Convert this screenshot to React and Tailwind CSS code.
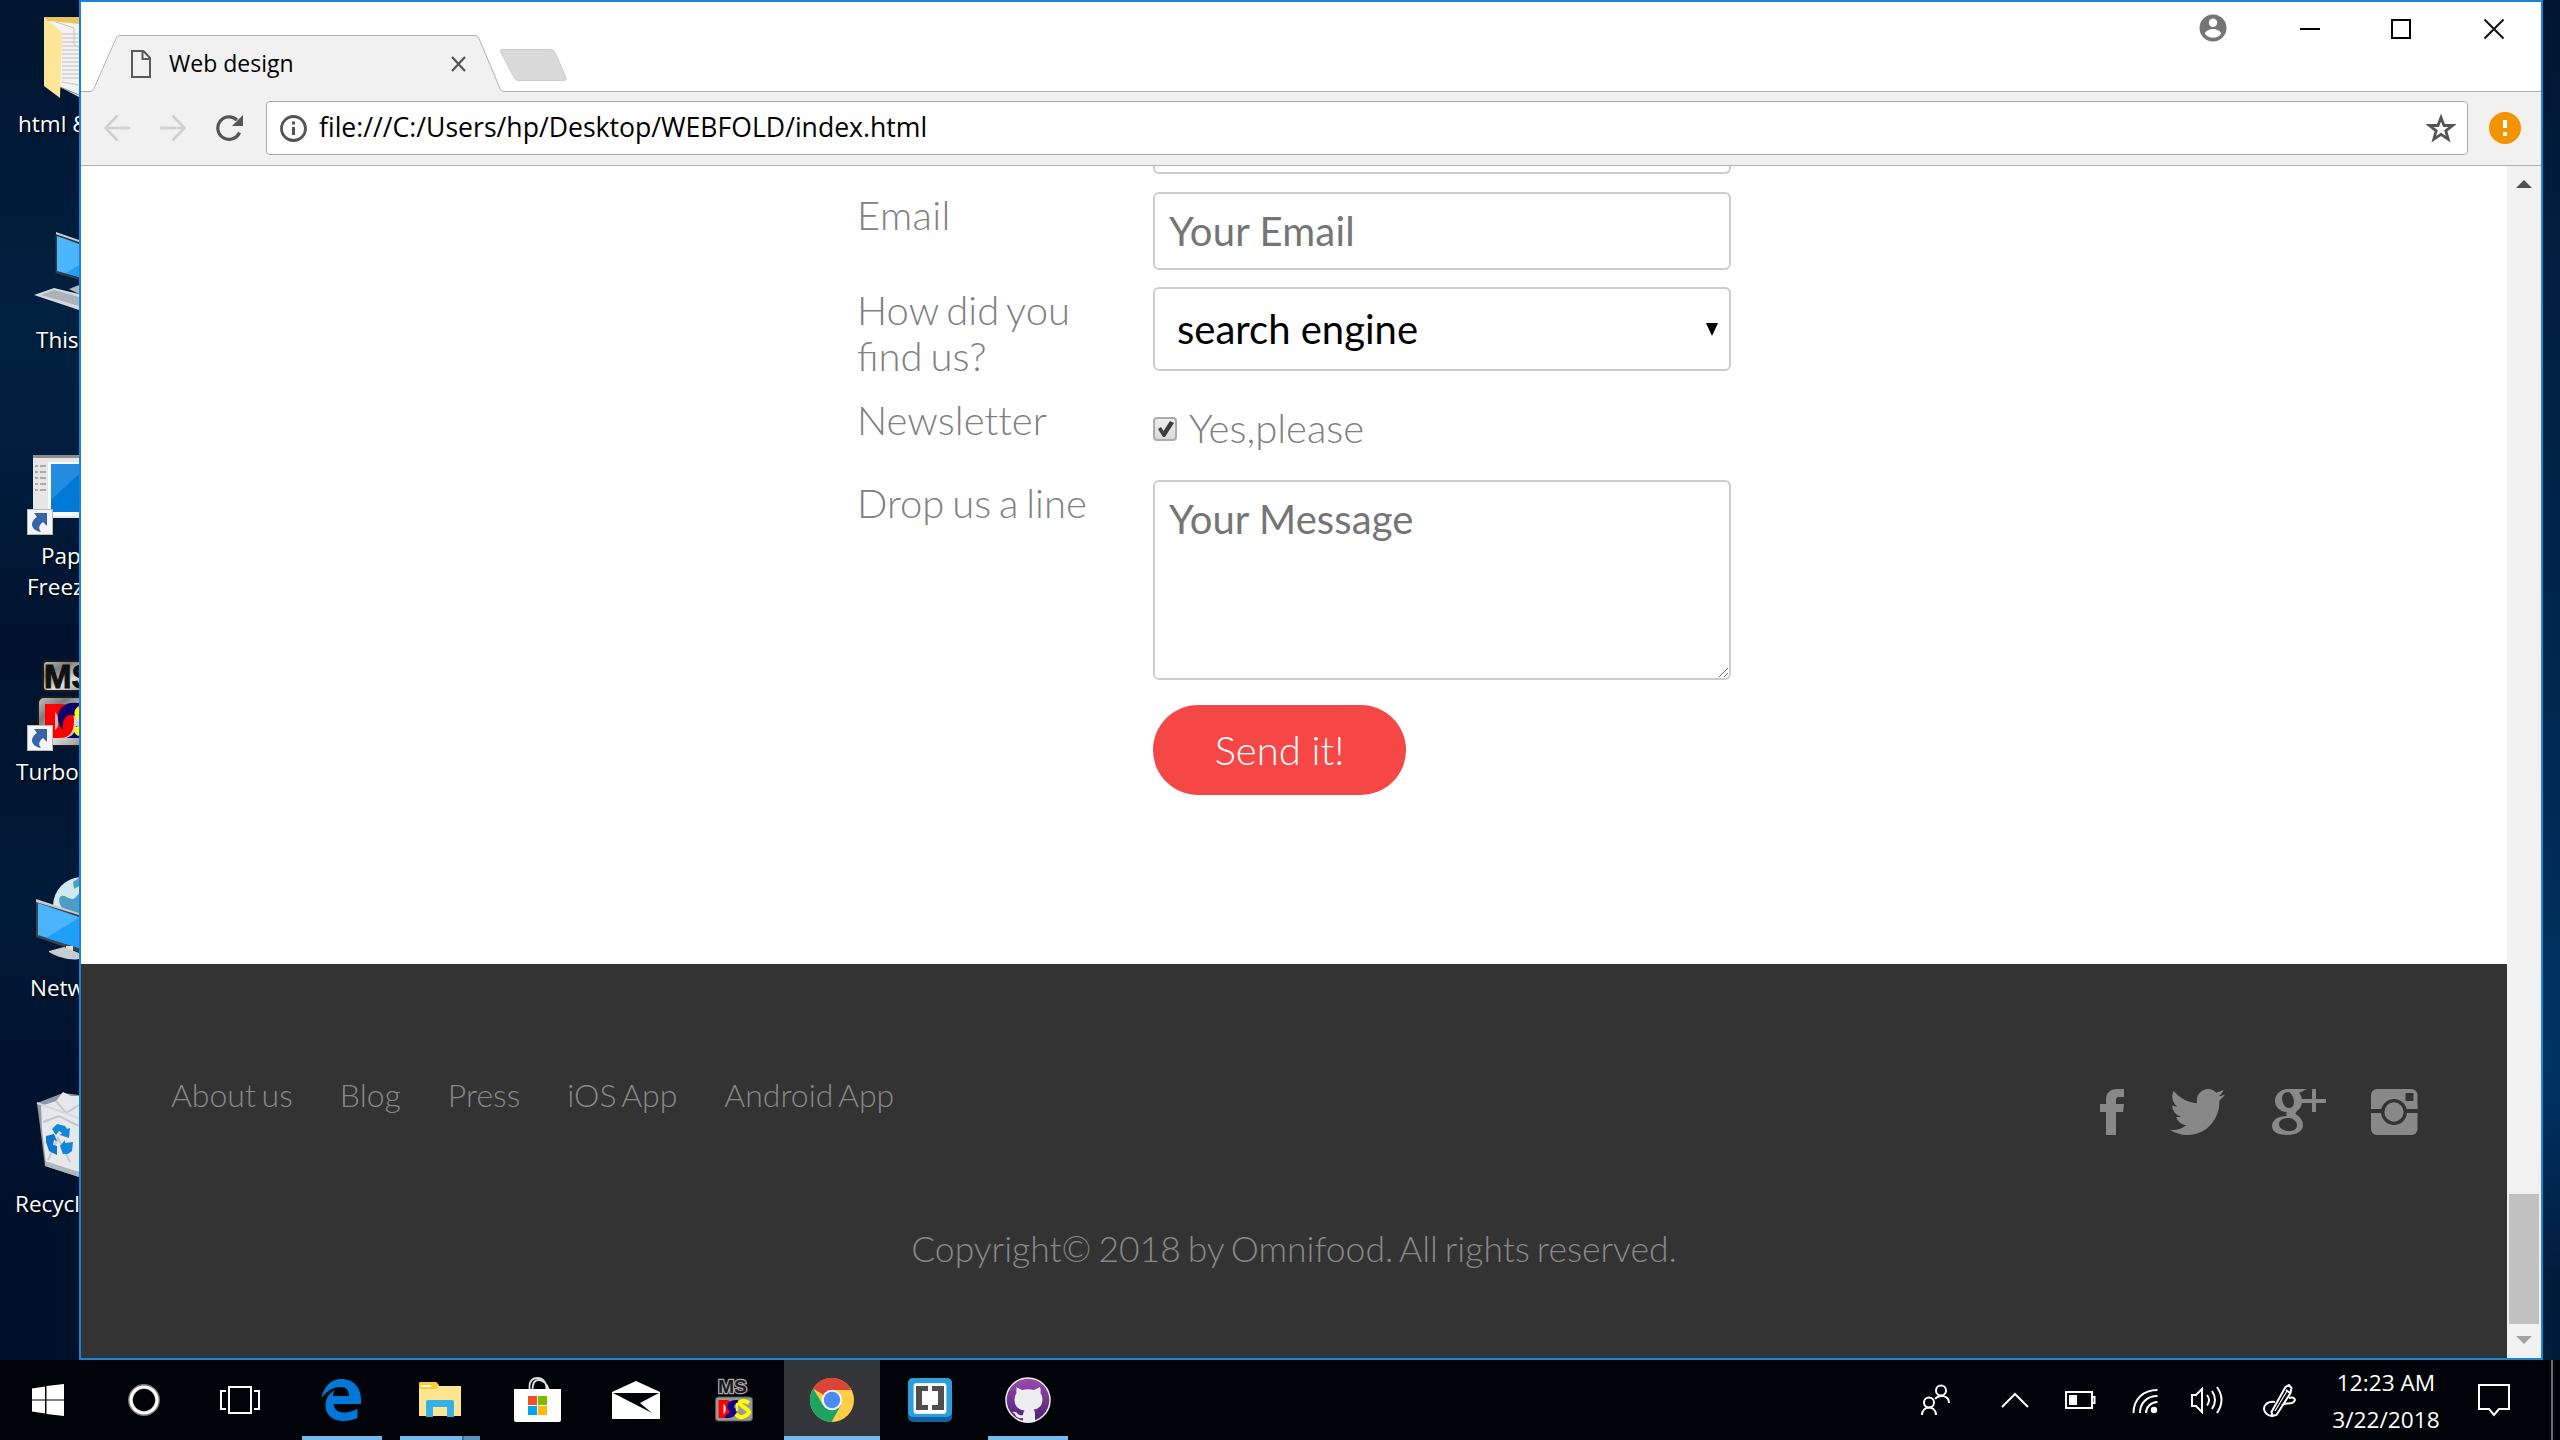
import React from "react";

function Art({ box, className = "", children, stretch }) {
  const [, , w, h] = box;
  return (
    <svg
      width={w}
      height={h}
      viewBox={box.join(" ")}
      preserveAspectRatio={stretch ? "none" : "xMidYMid meet"}
      className={"block shrink-0 " + className}
    >
      {children}
    </svg>
  );
}

/* ---------- Desktop icons ---------- */

function Shortcut({ y }) {
  return (
    <g transform={`translate(27 ${y})`}>
      <rect x="0.5" y="0.5" width="25" height="25" fill="#f6f6f6" stroke="#b9b9b9" />
      <path d="M7 4h13v13l-4-4c-4 3-5 6-2 10C7 22 3 17 6 12c1-2 2-3 4-4z" fill="#3565a8" />
    </g>
  );
}

function FolderArt() {
  return (
    <Art box={[0, 0, 79, 108]}>
      <path d="M44 17h35v70L44 80z" fill="#e9c562" />
      <path d="M49 21l30 3v73L60 87z" fill="#f3f3f3" />
      <path d="M62 34h17M62 38h17M62 42h17M62 46h17M62 50h17M62 54h17M62 58h17M62 62h17M62 66h17M62 70h17M62 74h17M62 78h17M62 82l17 3" stroke="#d0d0d0" strokeWidth="1.500" />
      <path d="M56 22l18 6v16l5 4" stroke="#d8c79a" fill="none" />
      <path d="M60 87l19 8" stroke="#777" />
      <path d="M44 18l18 14-2 66-16-12z" fill="#ffe598" />
    </Art>
  );
}

function ThisPcArt() {
  return (
    <Art box={[0, 216, 79, 108]}>
      <path d="M56 232l23 8v4l-23-9z" fill="#c6cbd0" />
      <path d="M55.500 234l23.500 8v38l-23.500-7z" fill="#303a42" />
      <path d="M57 236l22 8v33l-22-6z" fill="#4bb5fd" />
      <path d="M66 273l13-8v12z" fill="#1ea0f3" />
      <path d="M69 289l10-4v9z" fill="#aeb6bd" />
      <path d="M34 295l20-7 25 6v16z" fill="#d5d9dd" />
      <path d="M41 295l13-5 25 7v9z" fill="#8b9298" opacity=".55" />
    </Art>
  );
}

function FreezerArt() {
  return (
    <Art box={[0, 432, 79, 108]}>
      <rect x="33" y="455" width="50" height="63" fill="#e6e6e6" />
      <rect x="33" y="455" width="50" height="3" fill="#8c8c92" />
      <rect x="48" y="462" width="40" height="54" fill="#fafafa" />
      <rect x="51" y="464" width="34" height="48" fill="#0078d7" />
      <path d="M51 464h28v10L51 500z" fill="#3b9ae6" opacity=".6" />
      {[466, 472, 478, 484, 490].map((y) => (
        <path key={y} d={`M35 ${y}h3M40 ${y}h6`} stroke="#aaa" strokeWidth="2" />
      ))}
      <Shortcut y={509} />
    </Art>
  );
}

function TurboArt() {
  return (
    <Art box={[0, 648, 79, 108]}>
      <defs>
        <linearGradient id="metal" x1="0" y1="0" x2="1" y2="1">
          <stop offset="0" stopColor="#c5c5c5" />
          <stop offset=".25" stopColor="#7c7c7c" />
          <stop offset=".55" stopColor="#dedede" />
          <stop offset="1" stopColor="#777" />
        </linearGradient>
      </defs>
      <rect x="43" y="661" width="60" height="30" rx="4" fill="url(#metal)" stroke="#1b1b1b" strokeWidth="2" />
      <text x="44" y="688" fontFamily="Liberation Sans" fontWeight="700" fontSize="33" stroke="#111" strokeWidth="1" fill="#111">MS</text>
      <rect x="38" y="697" width="60" height="49" rx="6" fill="url(#metal)" stroke="#1b1b1b" strokeWidth="2" />
      <path d="M45 704h16c9 0 13 7 13 17s-4 17-14 17H45z" fill="#f00" />
      <path d="M55 712v18c5-2 4-15 0-18z" fill="#bbb" />
      <path d="M79 703c-14-2-21 5-21 14 0 6 2 10 5 13-1-9 2-15 8-15 3 0 5 1 8 3z" fill="#10006e" />
      <path d="M66 738c8-2 9-7 10-12l3 2v10z" fill="#10006e" />
      <path d="M79 706c-7 4-5 12 0 14v16c-4-1-6-5-5-9h5" fill="#ff0" />
      <Shortcut y={725} />
    </Art>
  );
}

function NetworkArt() {
  return (
    <Art box={[0, 864, 79, 108]}>
      <circle cx="82" cy="906" r="29" fill="#cfe9ef" />
      <path d="M60 897c4-4 8 2 12 2s5-5 9-7v26l-18-5c0-6-6-10-3-16zM73 882l6-4v8l-5 3z" fill="#4e9dc5" />
      <path d="M36 900l43 14v38l-43-15z" fill="#39434c" />
      <path d="M36 899l43 14v2l-43-13z" fill="#c6cbd0" />
      <path d="M38 903l41 14v31l-41-13z" fill="#4ab4ff" />
      <path d="M46 938l33-20v30z" fill="#1f9ff5" />
      <path d="M66 946h7v7h-7z" fill="#dfe3e6" />
      <path d="M49 951l15-4 15 6v6c-8 2-22-2-30-7z" fill="#c6ccd1" />
    </Art>
  );
}

function BinArt() {
  return (
    <Art box={[0, 1080, 79, 108]}>
      <path d="M37 1103l26-10 16 2v82l-34-11z" fill="#8e98a4" />
      <path d="M41 1106l15-5 7-9 8 4 8 0v76l-33-8-4-34z" fill="#e6e8ea" />
      <path d="M56 1101l10 12 13-8M43 1122l16-6 20 10M48 1160l10-22 12 24" stroke="#c3c7cb" strokeWidth="2" fill="none" />
      <path d="M37 1103l42 15" stroke="#d4d9de" strokeWidth="2" />
      <path d="M45 1161l34 11v5l-34-11z" fill="#b1b6bb" />
      <path d="M52 1129l5-5 8 2 2 3 3-1-1 10-9-3 2-2-3-2-3 4z" fill="#0f86dc" />
      <path d="M46 1136l8-2 3 7-3-1-1 5 4 1v9l-8-4-3-9z" fill="#0b78d0" />
      <path d="M60 1146l5-6 0 3 8-1-1 9-4 3-5 0z" fill="#0f86dc" />
    </Art>
  );
}

function DeskCell({ art, indent, children }) {
  return (
    <div className="flex h-[216px] flex-col">
      {art}
      <div
        className={
          "whitespace-nowrap font-['Open_Sans','Noto_Sans',sans-serif] text-[22.5px] leading-[31px] text-white [text-shadow:1px_2px_3px_#000] " +
          indent
        }
      >
        {children}
      </div>
    </div>
  );
}

/* ---------- Browser chrome ---------- */

function TabStrip() {
  return (
    <div className="flex h-[90px] shrink-0 bg-white">
      <div className="relative h-[90px] w-[500px]">
        <Art box={[81, 2, 500, 90]}>
          <path d="M81 91.5h9q4 0 5-3l21-49q2-4 5-4h354q3 0 4 3l21 50q1 3 5 3h80v2H81z" fill="#f1f1f1" />
          <path d="M81 91.5h9q3 0 4-3l22-50q1-3 4-3h355q3 0 4 3l21 50q1 3 4 3h80" fill="none" stroke="#b0b0b0" />
          <path d="M503 49.500h47q4 0 5 3l11 25q1 3-3 3h-44q-4 0-5-3l-13-25q-2-3 2-3z" fill="#d9d9d9" stroke="#cbcbcb" />
        </Art>
        <div className="absolute inset-0 flex items-center pl-[50px] pt-[34px]">
          <Art box={[131, 50, 20, 28]}>
            <path d="M132 51h11.500l6.500 7v19h-18zM142.500 51v8h7.500" fill="none" stroke="#5a5a5a" strokeWidth="2" />
          </Art>
          <span className="ml-[18px] w-[282px] whitespace-nowrap pb-[2px] font-['Open_Sans','Noto_Sans',sans-serif] text-[23px] leading-[30px] text-black">Web design</span>
          <Art box={[451, 56, 15, 16]}>
            <path d="M452 57l13 14M465 57l-13 14" stroke="#555" strokeWidth="2.2" />
          </Art>
        </div>
      </div>
      <div className="flex h-[90px] flex-1 justify-end border-b border-[#b0b0b0] pt-[12px]">
        <Art box={[2199, 14, 28, 28]}>
          <circle cx="2213" cy="28" r="13.500" fill="#757575" />
          <circle cx="2213" cy="22.800" r="4.200" fill="#fff" />
          <path d="M2204.800 33.500c1-3 5-4.500 8.200-4.500s7.200 1.500 8.200 4.500c-2 3-5 4.300-8.200 4.300s-6.200-1.300-8.200-4.300z" fill="#fff" />
        </Art>
        <Art box={[2300, 14, 20, 28]} className="ml-[73px]">
          <path d="M2300 29h20" stroke="#000" strokeWidth="2" />
        </Art>
        <Art box={[2391, 14, 20, 28]} className="ml-[71px]">
          <rect x="2392" y="20" width="18" height="18" fill="none" stroke="#000" strokeWidth="2" />
        </Art>
        <Art box={[2484, 14, 20, 28]} className="ml-[73px] mr-[37px]">
          <path d="M2484.500 19.500l19 19M2503.500 19.500l-19 19" stroke="#111" strokeWidth="2" />
        </Art>
      </div>
    </div>
  );
}

function Toolbar() {
  return (
    <div className="flex h-[74px] shrink-0 items-center border-b border-[#b0b0b0] bg-[#f1f1f1] pb-[1px] pl-[23px] pr-[20px]">
      <Art box={[104, 114, 26, 28]}>
        <path d="M130 128h-24M117.500 115.500L105.500 128l12 12.500" fill="none" stroke="#d0d0d0" strokeWidth="2.600" />
      </Art>
      <Art box={[160, 114, 26, 28]} className="ml-[30px]">
        <path d="M160 128h24M172.500 115.500L184.500 128l-12 12.500" fill="none" stroke="#d0d0d0" strokeWidth="2.600" />
      </Art>
      <Art box={[215, 114, 28, 28]} className="ml-[29px]">
        <path d="M239.500 132.500a11.300 11.300 0 1 1-2.500-12.500" fill="none" stroke="#555" strokeWidth="3.200" />
        <path d="M243 115v11h-11z" fill="#555" />
      </Art>
      <div className="ml-[23px] flex h-[54px] flex-1 items-center rounded-[4px] border border-[#a9a9a9] bg-white">
        <Art box={[280, 114, 28, 28]} className="ml-[13px]">
          <circle cx="293.500" cy="128.500" r="12" fill="none" stroke="#555" strokeWidth="2.800" />
          <path d="M293.500 121.500v3M293.500 127v8" stroke="#555" strokeWidth="3" />
        </Art>
        <span className="ml-[11px] flex-1 whitespace-nowrap pb-[2px] font-['Open_Sans','Noto_Sans',sans-serif] text-[26.600px] leading-[36px] text-black">
          file:///C:/Users/hp/Desktop/WEBFOLD/index.html
        </span>
        <Art box={[2426, 113, 30, 30]} className="mr-[11px]">
          <path d="M2441 117.500l3 8h8.500l-6.700 5.300 2.400 8.400-7.200-4.800-7.200 4.800 2.400-8.400-6.700-5.300h8.500z" fill="none" stroke="#555" strokeWidth="2.800" />
        </Art>
      </div>
      <Art box={[2489, 112, 32, 32]} className="ml-[21px]">
        <circle cx="2505" cy="128" r="16" fill="#f29400" />
        <path d="M2505 120v8M2505 132v4" stroke="#fff" strokeWidth="4" />
      </Art>
    </div>
  );
}

/* ---------- Page ---------- */

const label = "text-[40px] leading-[46px] font-light text-[#808080] whitespace-nowrap [word-spacing:-3px]";
const field =
  "box-border w-[578px] rounded-[6px] border-2 border-[#ccc] bg-white text-[40px] font-normal";

function ContactForm() {
  return (
    <div className="h-[798px] bg-white pl-[776px]">
      <div className="ml-[296px] h-[8px] w-[578px] rounded-b-[6px] border-2 border-t-0 border-[#ccc]" />
      <div className="grid grid-cols-[296px_578px] grid-rows-[95px_109px_84px_225px_90px] pt-[18px]">
        <div className={label + " tracking-[0.4px]"}>Email</div>
        <input placeholder="Your Email" className={field + " h-[78px] px-[14px] tracking-[0.2px] placeholder:text-[#757575] placeholder:opacity-100"} />
        <div className={label}>
          How did you
          <br />
          find us?
        </div>
        <div className={field + " flex h-[84px] items-center justify-between pl-[22px] pr-[11px] leading-[48px] text-black"}>
          <span>search engine</span>
          <Art box={[1706, 322, 12, 13]}>
            <path d="M1706 322h12l-6 13z" fill="#000" />
          </Art>
        </div>
        <div className={label + " pt-[1px] [font-variant-ligatures:none]"}>Newsletter</div>
        <div className="flex pt-[8px]">
          <Art box={[1153, 404, 24, 46]}>
            <defs>
              <linearGradient id="chk" x1="0" y1="0" x2="0" y2="1">
                <stop offset="0" stopColor="#efefef" />
                <stop offset="1" stopColor="#dadada" />
              </linearGradient>
            </defs>
            <rect x="1154" y="418" width="22" height="22" rx="3" fill="url(#chk)" stroke="#acacac" strokeWidth="2" />
            <path d="M1158 429l3-2 2.500 4 6.500-10 4 2-9 14h-2z" fill="#3d3d3d" />
          </Art>
          <span className={label + " ml-[12px] pt-[1px]"}>Yes,please</span>
        </div>
        <div className={label}>Drop us a line</div>
        <div className="relative h-[200px] w-[578px]">
          <textarea
            placeholder="Your Message"
            className={field + " block h-[200px] resize-none px-[14px] py-[13px] leading-[48px] tracking-[0.1px] placeholder:text-[#757575] placeholder:opacity-100"}
          />
          <div className="absolute bottom-[3px] right-[3px]">
            <Art box={[0, 0, 9, 9]}>
              <path d="M0 9l9-9M5 9l4-4" stroke="#666" />
            </Art>
          </div>
        </div>
        <div />
        <button className="h-[90px] w-[253px] rounded-full bg-[#f64747] pb-[1px] text-[40px] font-light text-white">Send it!</button>
      </div>
    </div>
  );
}

function Footer() {
  const link = "whitespace-nowrap";
  return (
    <div className="flex-1 bg-[#333] font-light text-[#888]">
      <div className="flex h-[260px] justify-between pl-[90px] pr-[89px] pt-[112px]">
        <div className="flex gap-[47px] text-[32px] leading-[38px] [word-spacing:-3px]">
          <span className={link}>About us</span>
          <span className={link}>Blog</span>
          <span className={link}>Press</span>
          <span className={link}>iOS App</span>
          <span className={link}>Android App</span>
        </div>
        <div className="flex pt-[13px]">
          <Art box={[2100, 1089, 24, 46]}>
            <path d="M2100 1104h6v-4c0-7 4-11 11-11h7v8h-5c-2 0-3 1-3 3v4h8l-1 8h-7v23h-10v-23h-6z" fill="#888" />
          </Art>
          <svg width="55" height="46" viewBox="20 64 472 384" preserveAspectRatio="none" className="ml-[46px] block">
            <path
              fill="#888"
              d="M492 109.5c-17.4 7.7-36 12.9-55.6 15.3 20-12 35.4-31 42.6-53.6-18.7 11.1-39.4 19.2-61.5 23.5C399.8 75.8 374.6 64 346.8 64c-53.5 0-96.8 43.4-96.8 96.9 0 7.600.8 15 2.500 22.100-80.500-4-151.900-42.600-199.600-101.300-8.300 14.300-13.100 31-13.100 48.700 0 33.600 17.200 63.300 43.200 80.700-16-.4-31-4.800-44-12.100v1.200c0 47 33.400 86.100 77.700 95-8.100 2.200-16.700 3.400-25.500 3.400-6.200 0-12.300-.6-18.200-1.800 12.300 38.500 48.100 66.500 90.500 67.300-33.100 26-74.900 41.500-120.300 41.500-7.800 0-15.500-.5-23.100-1.400C62.800 432 113.700 448 168.300 448 346.600 448 444 300.300 444 172.200c0-4.200-.1-8.400-.3-12.500C462.600 146 479 129 492 109.500z"
            />
          </svg>
          <Art box={[2272, 1089, 54, 46]} className="ml-[47px]">
            <path
              fill="#888"
              fillRule="evenodd"
              d="M2307 1089l-8 4c2 2 3 4 3 8 0 5-2 8-5 10-2 2-2 3 0 4 4 3 6 6 6 10 0 6-6 10-16 10-9 0-15-3-15-9s6-10 15-10c-1-1-1-3 0-4-7 0-12-5-12-11 0-7 6-12 14-12zM2288 1092c-4 0-6 3-6 7 1 5 3 9 7 9s5-3 5-7c-1-5-3-9-6-9zM2288 1118c-6 0-9 3-9 6 0 4 4 7 10 7 5 0 8-2 8-6 0-3-2-4-4-6-1-1-3-1-5-1z"
            />
            <path d="M2302 1101h24M2314 1089v23" stroke="#888" strokeWidth="4" />
          </Art>
          <Art box={[2371, 1089, 47, 46]} className="ml-[45px]">
            <rect x="2371" y="1089" width="46.500" height="46" rx="6" fill="#888" />
            <path d="M2371 1111h47" stroke="#333" strokeWidth="4" />
            <circle cx="2394" cy="1112" r="11.300" fill="#888" stroke="#333" strokeWidth="3.300" />
            <rect x="2405.500" y="1093" width="8" height="8" rx="1" fill="#333" />
          </Art>
        </div>
      </div>
      <div className="pt-[3px] text-center text-[35.500px] leading-[43px] [word-spacing:-2.700px]">Copyright© 2018 by Omnifood. All rights reserved.</div>
    </div>
  );
}

function Scrollbar() {
  return (
    <div className="flex w-[34px] shrink-0 flex-col items-center bg-[#f1f1f1] pt-[14px]">
      <Art box={[0, 0, 16, 8]}>
        <path d="M0 8l8-8 8 8z" fill="#505050" />
      </Art>
      <div className="mt-[1006px] h-[130px] w-[30px] bg-[#c1c1c1]" />
      <Art box={[0, 0, 16, 8]} className="mt-[12px]">
        <path d="M0 0h16l-8 8z" fill="#a3a3a3" />
      </Art>
    </div>
  );
}

/* ---------- Taskbar ---------- */

function Slot({ active, underline, children }) {
  return (
    <div className={"flex h-[80px] w-[96px] shrink-0 flex-col items-center " + (active ? "bg-[#343639]" : "")}>
      <div className="flex h-[76px] items-center pt-[4px]">{children}</div>
      {underline}
    </div>
  );
}

function Taskbar() {
  const bar = <div className="h-[4px] w-[80px] bg-[#76b9ed]" />;
  return (
    <div className="flex h-[80px] w-full bg-[#000307]">
      <Slot>
        <Art box={[32, 1384, 32, 32]}>
          <path d="M32 1388.500l13-2v13H32zM46.500 1386l17.500-2v15.500H46.500zM32 1400.500h13v13l-13-2zM46.500 1400.500H64v15.500l-17.500-2z" fill="#fff" />
        </Art>
      </Slot>
      <Slot>
        <Art box={[128, 1384, 32, 32]}>
          <circle cx="144" cy="1400" r="13.500" fill="none" stroke="#777" strokeWidth="5" />
          <circle cx="144" cy="1400" r="13" fill="none" stroke="#fff" strokeWidth="3.200" />
        </Art>
      </Slot>
      <Slot>
        <Art box={[220, 1386, 40, 28]}>
          <path d="M229 1387h22v26h-22zM226 1391h-5v18h5M254 1391h5v18h-5" fill="none" stroke="#fff" strokeWidth="2" />
        </Art>
      </Slot>
      <div className="ml-[6px] flex gap-[2px]">
        <Slot underline={bar}>
          <Art box={[321, 1379, 40, 42]} className="mr-[2px]">
            <path
              fill="#0078d7"
              d="M321.500 1398c2-11 9-19 20-19 12 0 19.500 9 19.500 20v5h-27.500c.5 6 5 8.500 11 8.500 4.500 0 8.500-1.300 13-3.700v9.200c-4 2-9 3-14 3-11 0-18-6-18-15.500 0-7 3.500-12.500 9.500-15.500-1.500 2-2 4-2 6h16c0-6-3-9-8.500-9-8 0-14 4.500-19 11z"
            />
          </Art>
        </Slot>
        <Slot
          underline={
            <div className="flex h-[4px] w-[80px]">
              <div className="w-[62px] bg-[#76b9ed]" />
              <div className="w-[18px] border-l-2 border-[#446d8f] bg-[#5d92bf]" />
            </div>
          }
        >
          <Art box={[419, 1382, 42, 36]}>
            <path d="M421 1382h15l3 4h22v30h-42v-32q0-2 2-2z" fill="#ffe592" />
            <path d="M421 1382h15l3 3-3 4h-17v-5q0-2 2-2z" fill="#fccc35" />
            <path d="M421 1386h10" stroke="#fff" strokeWidth="2" />
            <path d="M426 1417v-15q0-2 2-2h24q2 0 2 2v15h-7v-10h-14v10z" fill="#36b1e8" />
          </Art>
        </Slot>
        <Slot>
          <Art box={[514, 1376, 47, 45]} className="mr-[2px] mb-[2px]">
            <path d="M529.500 1389v-3c0-6 3-9 8-9s9 4 9 11M532.500 1389c0-6 2-10 6-10s9 4 10 9" fill="none" stroke="#ddd" strokeWidth="1.800" />
            <path d="M514 1388h47v31q0 2-2 2h-43q-2 0-2-2z" fill="#fff" />
            <path d="M528 1395h9v9h-9z" fill="#f25022" />
            <path d="M538 1395h9v9h-9z" fill="#7fba00" />
            <path d="M528 1405h9v9h-9z" fill="#00a4ef" />
            <path d="M538 1405h9v9h-9z" fill="#ffb900" />
          </Art>
        </Slot>
        <Slot>
          <Art box={[612, 1381, 48, 38]}>
            <path d="M612 1392l24-11 24 11v27h-48z" fill="#fff" />
            <path d="M613 1393h46l-19 10 12 10z" fill="#000307" />
          </Art>
        </Slot>
        <Slot>
          <Art box={[715, 1378, 38, 44]}>
            <text x="718" y="1393" fontFamily="Liberation Sans" fontWeight="700" fontSize="19" textLength="29" lengthAdjust="spacingAndGlyphs" fill="#1a1a1a" stroke="#aaa" strokeWidth="2.400" paintOrder="stroke">MS</text>
            <rect x="715.500" y="1397" width="37" height="24" rx="3" fill="#999" stroke="#555" />
            <path d="M718.500 1400h8c9 0 9 18 0 18h-8z" fill="#f00" />
            <path d="M723.500 1404v10c3-1 3-9 0-10z" fill="#ddd" />
            <path d="M738 1400c-11-1-14 8-8 11-1 4-5 2-5 7 10 1 15-6 9-11 0-3 4-2 4-7z" fill="#10008a" />
            <path d="M749 1403q-5-3-8-1.500t2 5 6 5-4 4.500-9-2" fill="none" stroke="#ff0" strokeWidth="4" />
            <path d="M737 1403v8" stroke="#ff0" strokeWidth="2.500" />
          </Art>
        </Slot>
        <Slot active underline={<div className="h-[4px] w-full bg-[#76b9ed]" />}>
          <Art box={[809, 1377, 46, 46]}>
            <circle cx="832" cy="1400" r="22" fill="#ffce44" />
            <path d="M832 1400l-19-11.500A22 22 0 0 1 851.500 1390H832z" fill="#db4437" />
            <path d="M813.200 1388.500A22 22 0 0 0 831.500 1422l9.500-17-9-5-9 5z" fill="#1da462" />
            <circle cx="832" cy="1400" r="10.300" fill="#f1f1f1" />
            <circle cx="832" cy="1400" r="8.200" fill="#4c8bf5" />
          </Art>
        </Slot>
        <Slot>
          <Art box={[908, 1378, 44, 44]}>
            <rect x="908" y="1378" width="44" height="44" rx="5" fill="#14619f" />
            <rect x="908" y="1378" width="44" height="39" rx="5" fill="#2a9fdb" />
            <rect x="914" y="1383.500" width="32" height="30" rx="2" fill="#fff" stroke="#dff0fa" />
            <path d="M916 1386h12v5h-6v14h6v5h-12zM944 1386h-12v5h6v14h-6v5h12z" fill="#4f4f4f" />
          </Art>
        </Slot>
        <Slot underline={bar}>
          <Art box={[1005, 1377, 46, 46]}>
            <defs>
              <linearGradient id="gh" x1="0" y1="0" x2="0" y2="1">
                <stop offset="0" stopColor="#9a4cad" />
                <stop offset="1" stopColor="#4a1f72" />
              </linearGradient>
            </defs>
            <circle cx="1028" cy="1400" r="22" fill="url(#gh)" stroke="#eee" strokeWidth="1.500" />
            <path
              d="M1016 1387l6 3q6-1.500 12 0l6-3q1 3 .5 6 2 3 2 6c0 7-4 10-9 10.500q1.500 1.500 1.500 4v8.500q-6 1.500-12 0v-4q-5 1-7-2-1-3-4-4 4-1 6 2 2 2 5 1 0-3 1.500-4.500c-6-1-10-4-10-11q0-3.500 2-6.500-.5-3 .5-6z"
              fill="#ededf0"
            />
          </Art>
        </Slot>
      </div>

      <div className="ml-auto flex items-center">
        <Art box={[1920, 1384, 31, 32]}>
          <g fill="none" stroke="#fff" strokeWidth="2">
            <circle cx="1941" cy="1390.500" r="5" />
            <circle cx="1929" cy="1402.500" r="5" />
            <path d="M1922 1415c0-10 14-10 14 0M1935 1399c4-5 14-4 14 4" />
          </g>
        </Art>
        <Art box={[2001, 1391, 28, 18]} className="ml-[50px]">
          <path d="M2002 1407l13-13 13 13" fill="none" stroke="#fff" strokeWidth="2" />
        </Art>
        <Art box={[2065, 1391, 31, 20]} className="ml-[36px]">
          <path d="M2066 1393h26v16h-26zM2092 1398h2.500v6h-2.500" fill="none" stroke="#fff" strokeWidth="2" />
          <path d="M2069 1396h8v10h-8z" fill="#fff" />
        </Art>
        <Art box={[2132, 1388, 26, 27]} className="ml-[36px]">
          <g fill="none" stroke="#fff" strokeWidth="2">
            <path d="M2133.500 1414c0-14 10-23 24-23M2140 1414c0-10 7-17 17.500-17M2146 1414c0-6 5-11 11.500-11" />
          </g>
          <circle cx="2154" cy="1411" r="3.200" fill="#fff" />
        </Art>
        <Art box={[2190, 1385, 35, 30]} className="ml-[32px]">
          <path d="M2192 1395h4l6-6v23l-6-6h-4zM2207 1395q4 5 0 10.500M2212 1391q6 9 0 18M2217 1387q9 13 0 26" fill="none" stroke="#fff" strokeWidth="2" />
        </Art>
        <Art box={[2261, 1383, 36, 33]} className="ml-[37px]">
          <path
            d="M2288 1384l2.500 3-1 5-14 22-4 1-1-4 14-25zM2285 1389l4 3M2274 1401c-8-1-13 4-10 10 2 3 5 4 8 4M2288 1397c6-2 8 3 3 5-4 1-8 0-10 2"
            fill="none"
            stroke="#fff"
            strokeWidth="2"
          />
          <path d="M2286 1390l-12 20" stroke="#fff" strokeWidth="1.200" />
        </Art>
        <div className="ml-[23px] flex w-[130px] flex-col items-center whitespace-nowrap pt-[1px] font-['Open_Sans','Noto_Sans',sans-serif] text-[22.700px] leading-[37px] text-white">
          <span>12:23 AM</span>
          <span>3/22/2018</span>
        </div>
        <Art box={[2477, 1383, 34, 34]} className="ml-[26px]">
          <path d="M2479 1385h30v24h-10l-5 6-5-6h-10z" fill="none" stroke="#fff" strokeWidth="2" />
        </Art>
        <div className="ml-[40px] mr-[7px] h-[80px] w-[2px] bg-[#6b6b6b]" />
      </div>
    </div>
  );
}

export default function App() {
  return (
    <div className="flex h-[1440px] w-[2560px] flex-col overflow-hidden bg-[#00142e]">
      <div className="flex h-[1360px]">
        <div className="h-[1360px] w-[79px] shrink-0 overflow-hidden bg-[linear-gradient(180deg,#00142f_0%,#001a38_12%,#002140_24%,#001c3c_36%,#00122d_47%,#001632_58%,#001b3a_66%,#00122d_78%,#00112b_100%)]">
          <DeskCell art={<FolderArt />} indent="pl-[18px]">html &amp;</DeskCell>
          <DeskCell art={<ThisPcArt />} indent="pl-[36px]">This PC</DeskCell>
          <DeskCell art={<FreezerArt />} indent="pl-[41px]">
            Paper
            <div className="-ml-[14px]">Freezer</div>
          </DeskCell>
          <DeskCell art={<TurboArt />} indent="pl-[16px]">Turbo C</DeskCell>
          <DeskCell art={<NetworkArt />} indent="pl-[30px]">Network</DeskCell>
          <DeskCell art={<BinArt />} indent="pl-[15px]">Recycle</DeskCell>
        </div>
        <div className="flex w-[2464px] shrink-0 flex-col border-2 border-[#1883d7] bg-white">
          <TabStrip />
          <Toolbar />
          <div className="flex min-h-0 flex-1">
            <div className="flex flex-1 flex-col font-['Lato',sans-serif]">
              <ContactForm />
              <Footer />
            </div>
            <Scrollbar />
          </div>
        </div>
        <div className="flex-1 bg-[linear-gradient(180deg,#00142f_0%,#001d3d_15%,#00254a_45%,#003262_78%,#002a55_85%,#001a38_95%,#001c3a_100%)]" />
      </div>
      <Taskbar />
    </div>
  );
}
